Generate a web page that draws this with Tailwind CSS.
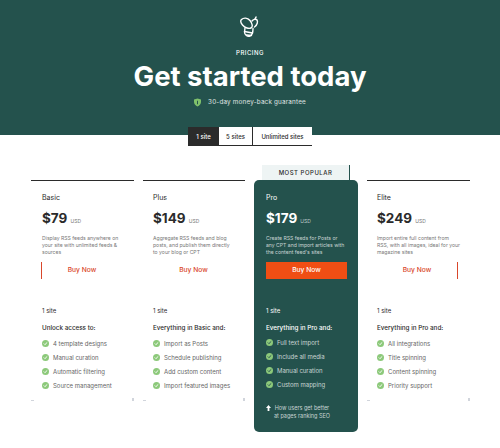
<!DOCTYPE html>
<html lang="en">

<head>
    <meta charset="UTF-8">
    <meta name="viewport" content="width=device-width, initial-scale=1.0">
    <title>Pricing</title>
    <script src="https://cdn.jsdelivr.net/npm/@tailwindcss/browser@4"></script>
</head>

<body class="bg-white font-['Inter',sans-serif] text-[#2b2b2b] overflow-hidden">
    <!-- Hero -->
    <header class="bg-[#24524d] h-[135px] flex flex-col items-center text-white">
        <svg class="mt-[16px] w-[20px] h-[22px]" viewBox="0 0 20 22" fill="none" stroke="white" stroke-width="1.400" stroke-linecap="round" stroke-linejoin="round">
            <path d="M1.500 3.500c2-2 6-2 8.500 1s3 6.500 1 7.500-6 0-8.500-3-2-4.500-1-5.500z" />
            <path d="M12 5c1-1.500 4-2.500 5-1s.5 5-2.500 7" />
            <path d="M15 3l1-2" />
            <path d="M5 12l-.5 4c0 3 3 5 5.500 4s3-4.500 3-7.500" />
            <path d="M4.500 15.500l8 1.500M6.500 19l5 .5" />
        </svg>
        <p class="mt-[11px] text-[6px] leading-[8px] font-medium tracking-[0.5px]">PRICING</p>
        <h1 class="mt-[1px] text-[27.5px] leading-[36px] font-bold">Get started today</h1>
        <div class="mt-[3px] flex items-center gap-[7px] text-[6.300px] leading-[10px] text-white/85 tracking-[0.2px]">
            <svg class="w-[7px] h-[9px]" viewBox="0 0 8 9">
                <path d="M4 0l4 1v3c0 2.500-2 4-4 5-2-1-4-2.500-4-5V1z" fill="#7fc16b" />
                <path d="M4 2.500v4" stroke="#24524d" stroke-width="1.200" />
            </svg>
            <span>30-day money-back guarantee</span>
        </div>
    </header>

    <!-- Site count tabs -->
    <div class="-mt-[8px] flex justify-center">
        <div class="flex h-[19px] text-[6px] font-medium border-b border-[#2b2b2b] bg-white">
            <div class="w-[31px] flex items-center justify-center bg-[#2b2b2b] text-white">1 site</div>
            <div class="w-[34px] flex items-center justify-center border-r border-[#2b2b2b]">5 sites</div>
            <div class="w-[59px] flex items-center justify-center">Unlimited sites</div>
        </div>
    </div>

    <!-- Plans -->
    <main class="mt-[34px] px-[31px] grid grid-cols-[103px_102px_104px_103px] gap-x-[9px] items-start">
        <!-- Basic -->
        <section class="relative h-[221px] border-t border-[#2b2b2b] pl-[11px] pr-[9px] pt-[12px]">
            <h2 class="text-[7px] leading-[9px]">Basic</h2>
            <p class="mt-[7px] leading-[18px] text-[13.500px] font-bold">$79 <span class="text-[5px] font-normal text-[#777]">USD</span></p>
            <p class="mt-[5px] text-[5.100px] leading-[7px] text-[#777]">Display RSS feeds anywhere on your site with unlimited feeds &amp; sources</p>
            <button class="block mt-[6px] -ml-[1px] w-[81px] h-[17px] border-l border-[#d9472b] text-[6.700px] font-medium text-[#d9472b]">Buy Now</button>
            <p class="mt-[28px] text-[6px] leading-[8px]">1 site</p>
            <h3 class="mt-[9px] text-[6.300px] leading-[9px] font-medium">Unlock access to:</h3>
            <ul class="mt-[6px] flex flex-col gap-[5px] text-[6px] leading-[9px] text-[#666]">
                <li class="flex items-center gap-[4px]"><svg class="w-[7px] h-[7px] shrink-0" viewBox="0 0 6 6"><circle cx="3" cy="3" r="3" fill="#8cc97a" /><path d="M1.500 3l1 1 2-2" fill="none" stroke="white" stroke-width=".8" /></svg>4 template designs</li>
                <li class="flex items-center gap-[4px]"><svg class="w-[7px] h-[7px] shrink-0" viewBox="0 0 6 6"><circle cx="3" cy="3" r="3" fill="#8cc97a" /><path d="M1.500 3l1 1 2-2" fill="none" stroke="white" stroke-width=".8" /></svg>Manual curation</li>
                <li class="flex items-center gap-[4px]"><svg class="w-[7px] h-[7px] shrink-0" viewBox="0 0 6 6"><circle cx="3" cy="3" r="3" fill="#8cc97a" /><path d="M1.500 3l1 1 2-2" fill="none" stroke="white" stroke-width=".8" /></svg>Automatic filtering</li>
                <li class="flex items-center gap-[4px]"><svg class="w-[7px] h-[7px] shrink-0" viewBox="0 0 6 6"><circle cx="3" cy="3" r="3" fill="#8cc97a" /><path d="M1.500 3l1 1 2-2" fill="none" stroke="white" stroke-width=".8" /></svg>Source management</li>
            </ul>
            <span class="absolute left-0 bottom-0 w-[3px] h-[1px] bg-gray-300"></span>
            <span class="absolute right-0 bottom-0 w-[2px] h-[3px] bg-gray-300"></span>
        </section>

        <!-- Plus -->
        <section class="relative h-[221px] border-t border-[#2b2b2b] px-[10px] pt-[12px]">
            <h2 class="text-[7px] leading-[9px]">Plus</h2>
            <p class="mt-[7px] leading-[18px] text-[13.500px] font-bold">$149 <span class="text-[5px] font-normal text-[#777]">USD</span></p>
            <p class="mt-[5px] text-[5.100px] leading-[7px] text-[#777]">Aggregate RSS feeds and blog posts, and publish them directly to your blog or CPT</p>
            <button class="block mt-[6px] w-[81px] h-[17px] text-[6.700px] font-medium text-[#d9472b]">Buy Now</button>
            <p class="mt-[28px] text-[6px] leading-[8px]">1 site</p>
            <h3 class="mt-[9px] text-[6.300px] leading-[9px] font-medium">Everything in Basic and:</h3>
            <ul class="mt-[6px] flex flex-col gap-[5px] text-[6px] leading-[9px] text-[#666]">
                <li class="flex items-center gap-[4px]"><svg class="w-[7px] h-[7px] shrink-0" viewBox="0 0 6 6"><circle cx="3" cy="3" r="3" fill="#8cc97a" /><path d="M1.500 3l1 1 2-2" fill="none" stroke="white" stroke-width=".8" /></svg>Import as Posts</li>
                <li class="flex items-center gap-[4px]"><svg class="w-[7px] h-[7px] shrink-0" viewBox="0 0 6 6"><circle cx="3" cy="3" r="3" fill="#8cc97a" /><path d="M1.500 3l1 1 2-2" fill="none" stroke="white" stroke-width=".8" /></svg>Schedule publishing</li>
                <li class="flex items-center gap-[4px]"><svg class="w-[7px] h-[7px] shrink-0" viewBox="0 0 6 6"><circle cx="3" cy="3" r="3" fill="#8cc97a" /><path d="M1.500 3l1 1 2-2" fill="none" stroke="white" stroke-width=".8" /></svg>Add custom content</li>
                <li class="flex items-center gap-[4px]"><svg class="w-[7px] h-[7px] shrink-0" viewBox="0 0 6 6"><circle cx="3" cy="3" r="3" fill="#8cc97a" /><path d="M1.500 3l1 1 2-2" fill="none" stroke="white" stroke-width=".8" /></svg>Import featured images</li>
            </ul>
            <span class="absolute left-0 bottom-0 w-[3px] h-[1px] bg-gray-300"></span>
            <span class="absolute right-0 bottom-0 w-[2px] h-[3px] bg-gray-300"></span>
        </section>

        <!-- Pro -->
        <section class="relative h-[252px] rounded-[5px] bg-[#24524d] text-white px-[12px] pt-[13px]">
            <div class="absolute left-[8px] -top-[15px] w-[88px] h-[15px] bg-[#eef4f4] border-r border-[#24524d] flex items-center justify-center text-[6px] font-medium tracking-[0.5px] text-[#2b2b2b]">MOST POPULAR</div>
            <h2 class="text-[7px] leading-[9px]">Pro</h2>
            <p class="mt-[7px] leading-[18px] text-[13.500px] font-bold">$179 <span class="text-[5px] font-normal text-white/70">USD</span></p>
            <p class="mt-[5px] text-[5.100px] leading-[7px] text-white/75">Create RSS feeds for Posts or any CPT and import articles with the content feed's sites</p>
            <button class="block mt-[6px] w-[81px] h-[17px] bg-[#f04e14] text-[6.700px] font-medium text-white">Buy Now</button>
            <p class="mt-[28px] text-[6px] leading-[8px]">1 site</p>
            <h3 class="mt-[9px] text-[6.300px] leading-[9px] font-medium">Everything in Pro and:</h3>
            <ul class="mt-[5px] flex flex-col gap-[5px] text-[6px] leading-[9px] text-white/75">
                <li class="flex items-center gap-[4px]"><svg class="w-[7px] h-[7px] shrink-0" viewBox="0 0 6 6"><circle cx="3" cy="3" r="3" fill="#8cc97a" /><path d="M1.500 3l1 1 2-2" fill="none" stroke="#24524d" stroke-width=".8" /></svg>Full text import</li>
                <li class="flex items-center gap-[4px]"><svg class="w-[7px] h-[7px] shrink-0" viewBox="0 0 6 6"><circle cx="3" cy="3" r="3" fill="#8cc97a" /><path d="M1.500 3l1 1 2-2" fill="none" stroke="#24524d" stroke-width=".8" /></svg>Include all media</li>
                <li class="flex items-center gap-[4px]"><svg class="w-[7px] h-[7px] shrink-0" viewBox="0 0 6 6"><circle cx="3" cy="3" r="3" fill="#8cc97a" /><path d="M1.500 3l1 1 2-2" fill="none" stroke="#24524d" stroke-width=".8" /></svg>Manual curation</li>
                <li class="flex items-center gap-[4px]"><svg class="w-[7px] h-[7px] shrink-0" viewBox="0 0 6 6"><circle cx="3" cy="3" r="3" fill="#8cc97a" /><path d="M1.500 3l1 1 2-2" fill="none" stroke="#24524d" stroke-width=".8" /></svg>Custom mapping</li>
            </ul>
            <div class="mt-[15px] flex gap-[3px] text-[5.500px] leading-[8px] text-white/75">
                <svg class="w-[5px] h-[6px] mt-[1px] shrink-0" viewBox="0 0 5 6"><path d="M2.500 0L5 3H3.400v3H1.600V3H0z" fill="white" /></svg>
                <span class="text-center">How users get better<br>at pages ranking SEO</span>
            </div>
        </section>

        <!-- Elite -->
        <section class="relative h-[221px] border-t border-[#2b2b2b] px-[10px] pt-[12px]">
            <h2 class="text-[7px] leading-[9px]">Elite</h2>
            <p class="mt-[7px] leading-[18px] text-[13.500px] font-bold">$249 <span class="text-[5px] font-normal text-[#777]">USD</span></p>
            <p class="mt-[5px] text-[5.100px] leading-[7px] text-[#777]">Import entire full content from<br>RSS, with all images, ideal for your<br>magazine sites</p>
            <button class="block mt-[6px] w-[81px] h-[17px] border-r border-[#d9472b] text-[6.700px] font-medium text-[#d9472b]">Buy Now</button>
            <p class="mt-[28px] text-[6px] leading-[8px]">1 site</p>
            <h3 class="mt-[9px] text-[6.300px] leading-[9px] font-medium">Everything in Pro and:</h3>
            <ul class="mt-[6px] flex flex-col gap-[5px] text-[6px] leading-[9px] text-[#666]">
                <li class="flex items-center gap-[4px]"><svg class="w-[7px] h-[7px] shrink-0" viewBox="0 0 6 6"><circle cx="3" cy="3" r="3" fill="#8cc97a" /><path d="M1.500 3l1 1 2-2" fill="none" stroke="white" stroke-width=".8" /></svg>All integrations</li>
                <li class="flex items-center gap-[4px]"><svg class="w-[7px] h-[7px] shrink-0" viewBox="0 0 6 6"><circle cx="3" cy="3" r="3" fill="#8cc97a" /><path d="M1.500 3l1 1 2-2" fill="none" stroke="white" stroke-width=".8" /></svg>Title spinning</li>
                <li class="flex items-center gap-[4px]"><svg class="w-[7px] h-[7px] shrink-0" viewBox="0 0 6 6"><circle cx="3" cy="3" r="3" fill="#8cc97a" /><path d="M1.500 3l1 1 2-2" fill="none" stroke="white" stroke-width=".8" /></svg>Content spinning</li>
                <li class="flex items-center gap-[4px]"><svg class="w-[7px] h-[7px] shrink-0" viewBox="0 0 6 6"><circle cx="3" cy="3" r="3" fill="#8cc97a" /><path d="M1.500 3l1 1 2-2" fill="none" stroke="white" stroke-width=".8" /></svg>Priority support</li>
            </ul>
            <span class="absolute left-0 bottom-0 w-[3px] h-[1px] bg-gray-300"></span>
            <span class="absolute right-0 bottom-0 w-[2px] h-[3px] bg-gray-300"></span>
        </section>
    </main>
</body>

</html>
